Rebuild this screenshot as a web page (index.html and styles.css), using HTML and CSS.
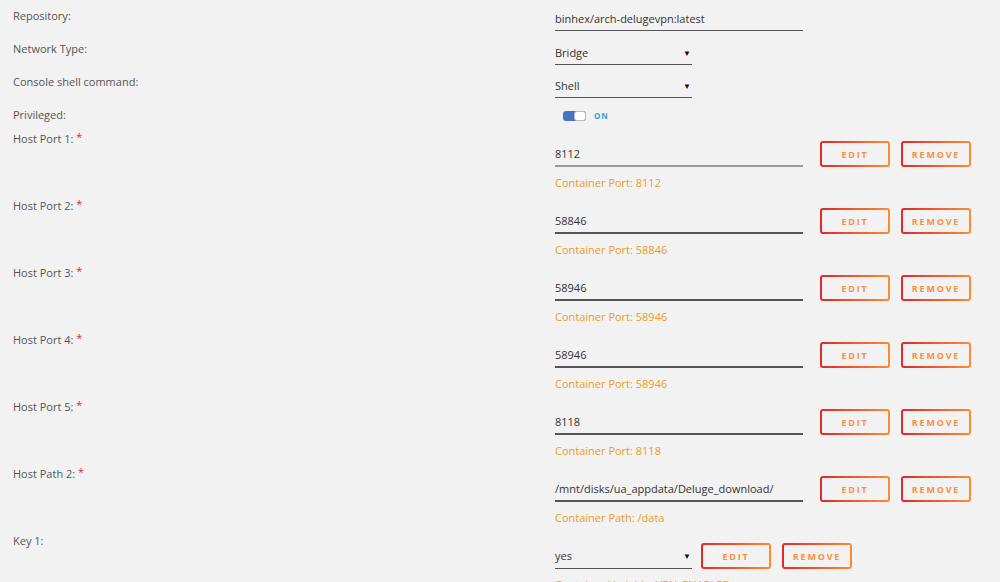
FILE: index.html
```html
<!DOCTYPE html>
<html lang="en">
<head>
    <meta charset="UTF-8">
    <title>Update Container</title>
    <link rel="stylesheet" href="styles.css">
</head>
<body>
    <div class="form">
        <div class="row">
            <label class="name">Repository:</label>
            <div class="value">
                <div class="text-input wide">binhex/arch-delugevpn:latest</div>
            </div>
        </div>

        <div class="row">
            <label class="name">Network Type:</label>
            <div class="value">
                <div class="text-input select">Bridge<span class="arrow">&#9660;</span></div>
            </div>
        </div>

        <div class="row">
            <label class="name">Console shell command:</label>
            <div class="value">
                <div class="text-input select">Shell<span class="arrow">&#9660;</span></div>
            </div>
        </div>

        <div class="row short">
            <label class="name">Privileged:</label>
            <div class="value">
                <div class="switch"><span class="track"><span class="knob"></span></span><span class="switch-label">ON</span></div>
            </div>
        </div>

        <div class="row config">
            <label class="name">Host Port 1: <span class="req">*</span></label>
            <div class="value">
                <div class="line">
                    <div class="text-input wide hover">8112</div>
                    <button>EDIT</button>
                    <button>REMOVE</button>
                </div>
                <div class="hint">Container Port: 8112</div>
            </div>
        </div>

        <div class="row config">
            <label class="name">Host Port 2: <span class="req">*</span></label>
            <div class="value">
                <div class="line">
                    <div class="text-input wide">58846</div>
                    <button>EDIT</button>
                    <button>REMOVE</button>
                </div>
                <div class="hint">Container Port: 58846</div>
            </div>
        </div>

        <div class="row config">
            <label class="name">Host Port 3: <span class="req">*</span></label>
            <div class="value">
                <div class="line">
                    <div class="text-input wide">58946</div>
                    <button>EDIT</button>
                    <button>REMOVE</button>
                </div>
                <div class="hint">Container Port: 58946</div>
            </div>
        </div>

        <div class="row config">
            <label class="name">Host Port 4: <span class="req">*</span></label>
            <div class="value">
                <div class="line">
                    <div class="text-input wide">58946</div>
                    <button>EDIT</button>
                    <button>REMOVE</button>
                </div>
                <div class="hint">Container Port: 58946</div>
            </div>
        </div>

        <div class="row config">
            <label class="name">Host Port 5: <span class="req">*</span></label>
            <div class="value">
                <div class="line">
                    <div class="text-input wide">8118</div>
                    <button>EDIT</button>
                    <button>REMOVE</button>
                </div>
                <div class="hint">Container Port: 8118</div>
            </div>
        </div>

        <div class="row config">
            <label class="name">Host Path 2: <span class="req">*</span></label>
            <div class="value">
                <div class="line">
                    <div class="text-input wide">/mnt/disks/ua_appdata/Deluge_download/</div>
                    <button>EDIT</button>
                    <button>REMOVE</button>
                </div>
                <div class="hint">Container Path: /data</div>
            </div>
        </div>

        <div class="row config">
            <label class="name">Key 1:</label>
            <div class="value">
                <div class="line">
                    <div class="text-input select">yes<span class="arrow">&#9660;</span></div>
                    <button>EDIT</button>
                    <button>REMOVE</button>
                </div>
                <div class="hint">Container Variable: VPN_ENABLED</div>
            </div>
        </div>
    </div>
</body>
</html>
```

FILE: styles.css
```css
* {
    box-sizing: border-box;
    margin: 0;
    padding: 0;
}

body {
    font-family: 'Open Sans', 'Noto Sans', sans-serif;
    font-size: 11px;
    line-height: 14px;
    background-color: #f2f2f2;
    color: #333;
    padding-top: 1px;
    overflow: hidden;
}

.row {
    display: grid;
    grid-template-columns: 555px 1fr;
    height: 33px;
}

.row.short {
    height: 24px;
}

.row.config {
    height: 67px;
}

.name {
    padding: 8px 0 0 13px;
    color: #555;
}

.req {
    color: #e22828;
    position: relative;
    top: -2px;
}

.value {
    padding-top: 11px;
}

.text-input {
    color: #333;
    padding-bottom: 4px;
    border-bottom: 1px solid #555;
    white-space: nowrap;
}

.text-input.wide {
    width: 248px;
}

.text-input.select {
    width: 137px;
    display: flex;
    justify-content: space-between;
    padding-top: 1px;
}

.arrow {
    font-size: 8px;
    color: #111;
    padding-right: 1px;
}

/* privileged switch */
.switch {
    display: flex;
    align-items: center;
    gap: 8px;
    margin: -2px 0 0 8px;
}

.track {
    display: flex;
    justify-content: flex-end;
    width: 23px;
    height: 10px;
    border-radius: 3px;
    background-color: #4672c4;
}

.knob {
    width: 12px;
    height: 10px;
    border-radius: 3px;
    background-color: #fff;
    border: 1px solid #bbb;
}

.switch-label {
    color: #3a9ad9;
    font-size: 8px;
    font-weight: 700;
    letter-spacing: 1px;
}

/* port / path rows */
.config .value {
    padding-top: 17px;
}

.line {
    display: flex;
    align-items: flex-end;
    height: 26px;
}

.line .text-input {
    padding-bottom: 4px;
    border-bottom-width: 2px;
    border-bottom-color: #555;
}

.line .text-input.wide {
    margin-right: 17px;
}

.line .text-input.hover {
    border-bottom-color: #999;
}

.line .text-input.select {
    margin-right: 9px;
    border-bottom-width: 1px;
    padding-bottom: 5px;
}

button {
    width: 70px;
    height: 26px;
    margin-right: 11px;
    border: 2px solid transparent;
    border-radius: 3px;
    background: linear-gradient(#f2f2f2, #f2f2f2) padding-box,
                linear-gradient(90deg, #e22828, #ff8c2f) border-box;
    color: #f7903f;
    font-family: 'Open Sans', 'Noto Sans', sans-serif;
    font-size: 9px;
    font-weight: 700;
    letter-spacing: 1.8px;
}

.hint {
    margin-top: 9px;
    color: #ee9a26;
}
```
